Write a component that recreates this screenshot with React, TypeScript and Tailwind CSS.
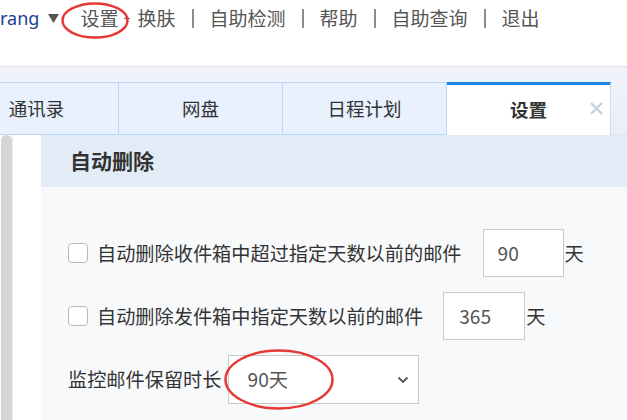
import React from "react";

function Sep() {
  return <span className="ml-[17px] mr-[15px] inline-block w-[2px] h-[19px] bg-[#8c8c8c]" />;
}

function Checkbox() {
  return <span className="inline-block w-[20px] h-[20px] shrink-0 rounded-[4px] border-[1.5px] border-[#b8b8b8] bg-white" />;
}

export default function App() {
  return (
    <div className="relative w-[627px] h-[420px] overflow-hidden bg-white font-['Noto_Sans_CJK_SC','Noto_Sans',sans-serif]">
      {/* top header */}
      <div className="h-[67px] border-b border-[#e1e3e8] bg-white">
        <div className="flex items-center h-[37px] text-[19px] text-[#555] whitespace-nowrap">
          <span className="text-[#1c3f94] text-[18px] font-['Noto_Sans',sans-serif]">rang</span>
          <svg className="ml-[9px]" width="11" height="9" viewBox="0 0 11 9">
            <path d="M0 0 L11 0 L5.5 9 Z" fill="#555" />
          </svg>
          <span className="ml-[21px]">设置</span>
          <span className="ml-[6px] mr-[7px] inline-block w-[6px] h-[1.5px] bg-[#666]" />
          <span>换肤</span>
          <Sep />
          <span>自助检测</span>
          <Sep />
          <span>帮助</span>
          <Sep />
          <span>自助查询</span>
          <Sep />
          <span>退出</span>
        </div>
      </div>
      {/* gradient strip */}
      <div className="h-[15px] bg-gradient-to-b from-[#f1f3f8] to-[#edf2fc]" />
      {/* tabs */}
      <div className="flex h-[53px] bg-[#edf2fb] -ml-[45px]">
        <div className="w-[164px] shrink-0 border border-l-0 border-[#b9d6f5] bg-[#e8f1fd] flex items-center justify-center text-[18.5px] text-[#333]">通讯录</div>
        <div className="w-[164px] shrink-0 border border-l-0 border-[#b9d6f5] bg-[#e8f1fd] flex items-center justify-center text-[18.5px] text-[#333]">网盘</div>
        <div className="w-[164px] shrink-0 border border-l-0 border-[#b9d6f5] bg-[#e8f1fd] flex items-center justify-center text-[18.5px] text-[#333]">日程计划</div>
        <div className="relative w-[164px] shrink-0 border-t-[3px] border-t-[#1e88e5] border-r border-r-[#d3dae4] bg-white flex items-center justify-center text-[18.5px] font-bold text-[#333]">
          设置
          <svg className="absolute right-[7px] top-[17px]" width="13" height="13" viewBox="0 0 13 13">
            <path d="M1 1 L12 12 M12 1 L1 12" stroke="#c3cbdd" strokeWidth="2" />
          </svg>
        </div>
        <div className="flex-1 border-b border-[#dfe4ec] bg-gradient-to-b from-[#eef2fb] to-[#e9eef8]" />
      </div>
      {/* body */}
      <div className="flex h-[285px]">
        <div className="ml-[1px] w-[11px] bg-[#d6d6d6] rounded-t-[6px]" />
        <div className="w-[1px] bg-[#ececec]" />
        <div className="w-[28px] bg-white" />
        <div className="flex-1 flex flex-col bg-[#f8f9fb] text-[19.2px] text-[#333]">
          <div className="h-[52px] shrink-0 bg-[#e2ecf7] pl-[29px] flex items-center text-[21px] font-bold text-[#333]">自动删除</div>
          <div className="mt-[42px] h-[48px] flex items-center pl-[27px] whitespace-nowrap">
            <Checkbox />
            <span className="ml-[9px]">自动删除收件箱中超过指定天数以前的邮件</span>
            <div className="ml-[21px] w-[81px] h-[48px] border border-[#c9c9c9] bg-white flex items-center pl-[14px] text-[#555]">90</div>
            <span className="ml-[1px]">天</span>
          </div>
          <div className="mt-[15px] h-[48px] flex items-center pl-[27px] whitespace-nowrap">
            <Checkbox />
            <span className="ml-[9px]">自动删除发件箱中指定天数以前的邮件</span>
            <div className="ml-[20px] w-[82px] h-[48px] border border-[#c9c9c9] bg-white flex items-center pl-[15px] text-[#555]">365</div>
            <span className="ml-[1px]">天</span>
          </div>
          <div className="mt-[15px] h-[49px] flex items-center pl-[27px] whitespace-nowrap">
            <span>监控邮件保留时长</span>
            <div className="ml-[6px] w-[191px] h-[49px] border border-[#c9c9c9] bg-white flex items-center justify-between pl-[19px] pr-[9px] text-[#555]">
              <span>90天</span>
              <svg width="12" height="8" viewBox="0 0 12 8">
                <path d="M1.5 1.5 L6 6 L10.5 1.5" stroke="#555" strokeWidth="1.8" fill="none" />
              </svg>
            </div>
          </div>
        </div>
      </div>
      {/* red annotation ellipses */}
      <svg className="absolute left-0 top-0 pointer-events-none" width="627" height="420" viewBox="0 0 627 420">
        <ellipse cx="95" cy="20.5" rx="32.5" ry="17" fill="none" stroke="#e53935" strokeWidth="2.5" />
        <ellipse cx="279" cy="379.5" rx="53.5" ry="29" fill="none" stroke="#e53935" strokeWidth="2.5" />
      </svg>
    </div>
  );
}
